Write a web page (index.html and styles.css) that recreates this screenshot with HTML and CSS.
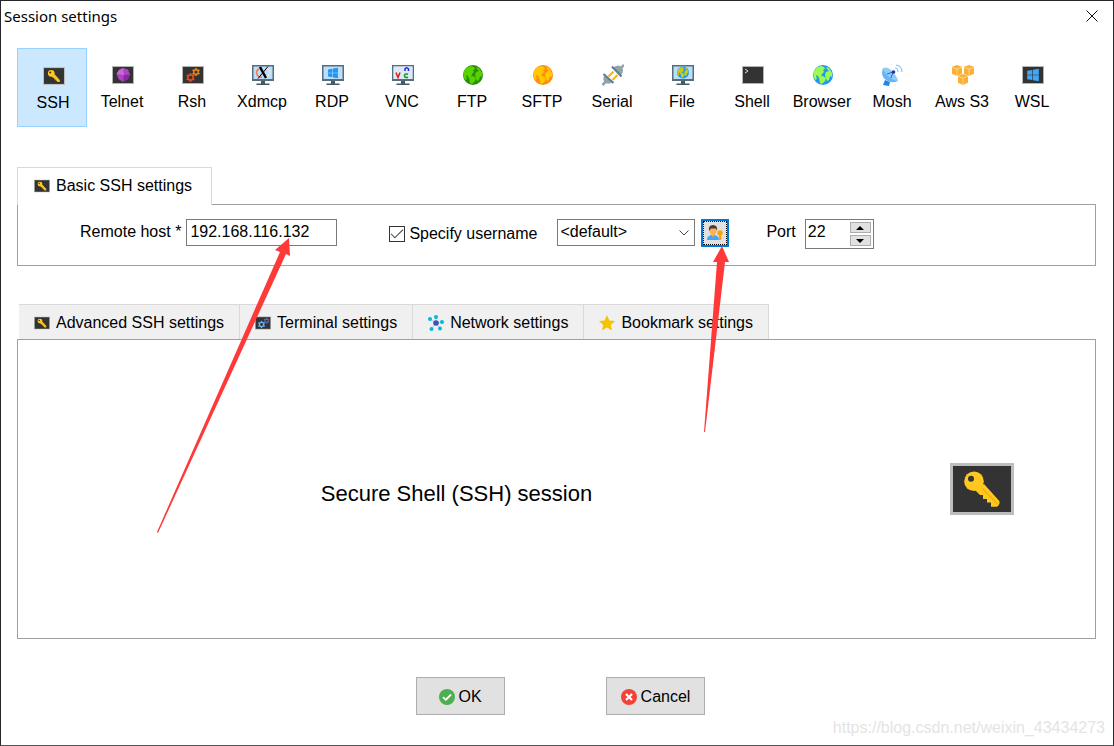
FILE: index.html
```html
<!DOCTYPE html>
<html lang="en">
<head>
<meta charset="utf-8">
<meta name="viewport" content="width=device-width, initial-scale=1">
<title>Session settings</title>
<link rel="stylesheet" href="styles.css">
</head>
<body>
<svg class="sprite" aria-hidden="true">
  <symbol id="key" viewBox="0 0 64 52">
    <rect width="64" height="52" fill="#bdbdbd"/>
    <rect x="3" y="3" width="58" height="46" fill="#333"/>
    <path d="M34 21 49.300 38Q50.500 41 47 43.800H41V39.500H37V36H33V32H30L25 27Z" fill="#ffc71f"/>
    <path d="M32.500 25.500 48 41.500" stroke="#efb410" stroke-width="1.500"/>
    <circle cx="24" cy="18.300" r="9.800" fill="#ffc71f"/>
    <circle cx="21" cy="15.700" r="3" fill="#333"/>
  </symbol>
  <symbol id="screen" viewBox="0 0 24 24">
    <rect x="2" y="3" width="22" height="18" fill="#b4b4b4"/>
    <rect x="3" y="4" width="20" height="16" fill="#333"/>
  </symbol>
  <symbol id="monitor" viewBox="0 0 24 24">
    <path d="M2 2h22v16H2z" fill="#546e7a"/>
    <path d="M3.500 3.500h19v12.500h-19z" fill="#bbdefb"/>
    <path d="M11 18h4v2.500h-4zM6.500 20.500h13V22h-13z" fill="#455a64"/>
  </symbol>
  <symbol id="land" viewBox="0 0 20 20">
    <path d="M1 6 4 2.500 8 1l3 1 1 2-2 1 1 2-2 2-1 3-2 1-2-3-1 1 1 3-2 1Q-.5 10 1 6ZM6 12l4-1 3 2-1 3-3 3-2-1ZM13 2l3 1 3 5v4l-2-1-1 4-2 1-2-6 1-3 3-1-2-2Z"/>
  </symbol>
  <symbol id="windows" viewBox="0 0 20 20">
    <path d="m1 3.500 8-1.300V9.500H1zM10 2l9-1.500v9h-9zM1 10.500h8v7.300l-8-1.300zM10 10.500h9v9L10 18z"/>
  </symbol>
  <symbol id="cog" viewBox="0 0 12 12">
    <circle cx="6" cy="6" r="3.500" fill="none" stroke="currentColor" stroke-width="2.200"/>
    <path d="M6 0v2M6 10v2M.8 3l1.800 1M9.400 8l1.800 1M.8 9l1.800-1M9.400 4l1.800-1" stroke="currentColor" stroke-width="2.400"/>
  </symbol>
  <symbol id="cube" viewBox="0 0 12 12">
    <path d="m6 0 5.500 2v7.500L6 12 .5 9.500V2z" fill="#fbb034"/>
    <path d="m.5 2.500 5.500 2 5.500-2M6 4.500V12" fill="none" stroke="#fde0a6" stroke-width=".8"/>
  </symbol>
</svg>

<main class="window">
  <header class="titlebar">
    <h1 class="title">Session settings</h1>
    <button class="close" type="button" aria-label="Close">
      <svg width="12" height="12" viewBox="0 0 12 12"><path d="m.5.5 11 11m0-11-11 11" stroke="#111" stroke-width="1"/></svg>
    </button>
  </header>

  <nav class="sessions" aria-label="Session type">
    <button class="session session-active" type="button">
      <svg class="session-icon" viewBox="0 0 24 24"><use href="#key" x="2" y="3" width="22" height="18"/></svg>SSH</button>
    <button class="session" type="button">
      <svg class="session-icon" viewBox="0 0 24 24"><use href="#screen"/><path d="m13 5 5 1.500 2 5-2 4.500-5 3-4.500-3L6.500 11 9 7z" fill="#ab47bc"/><path d="m14 12 6-.5-2 4.500-5 3z" fill="#8e24aa"/><path d="m9 7 4-2 1 7-7.500-1z" fill="#ce63db"/></svg>Telnet</button>
    <button class="session" type="button">
      <svg class="session-icon" viewBox="0 0 24 24"><use href="#screen"/><use href="#cog" class="cog-red" x="6" y="10" width="9" height="9"/><use href="#cog" class="cog-amber" x="12" y="5" width="8" height="8"/></svg>Rsh</button>
    <button class="session" type="button">
      <svg class="session-icon" viewBox="0 0 24 24"><use href="#monitor"/><path d="M17 5.500c5 2 3 8-2 9" fill="none" stroke="#f2e6e0" stroke-width="1.500"/><path d="M9 6c-4 2-3 8 3 8.500" fill="none" stroke="#f4774f" stroke-width="1.500"/><path d="m10 4 6 11" stroke="#000" stroke-width="2.500"/><path d="m18 3.500-10 12" stroke="#000" stroke-width="1"/></svg>Xdmcp</button>
    <button class="session" type="button">
      <svg class="session-icon" viewBox="0 0 24 24"><use href="#monitor"/><use href="#windows" x="7.500" y="4.500" width="11" height="11" fill="#2196f3"/></svg>RDP</button>
    <button class="session" type="button">
      <svg class="session-icon" viewBox="0 0 24 24"><use href="#monitor"/><path d="M3.500 3.500h19v12.500h-19z" fill="#dceaf6"/><path d="m6 9.500 2 5 2-5" fill="none" stroke="#e5191c" stroke-width="1.500"/><path d="M15 8V6q1.500-2.500 3.500 0v2" fill="none" stroke="#2626e0" stroke-width="1.500"/><path d="M18 11.200q-3.500-1-3.500 1.500t3.500 1.500" fill="none" stroke="#109618" stroke-width="1.500"/></svg>VNC</button>
    <button class="session" type="button">
      <svg class="session-icon" viewBox="0 0 24 24"><circle cx="13" cy="12" r="10" fill="#2e8b0d"/><use href="#land" x="3" y="2" width="20" height="20" fill="#55d400"/></svg>FTP</button>
    <button class="session" type="button">
      <svg class="session-icon" viewBox="0 0 24 24"><circle cx="13" cy="12" r="10" fill="#ff8c0a"/><use href="#land" x="3" y="2" width="20" height="20" fill="#ffc800"/></svg>SFTP</button>
    <button class="session" type="button">
      <svg class="session-icon" viewBox="0 0 24 24"><path d="m2.500 22 4-4M20 6l4-4" stroke="#90a4ae" stroke-width="2.500"/><path d="M4.500 12q-2.500 5 .5 7.500t8-.5zM12.500 5q5.500-4.500 9-1t-1 9z" fill="#90a4ae"/><path d="m3.500 11 10 9M12 3.500l9.500 10" stroke="#607d8b" stroke-width="2"/><path d="m8.500 13.500 5-5m-1 8.500 5-5" stroke="#ffb300" stroke-width="2"/></svg>Serial</button>
    <button class="session" type="button">
      <svg class="session-icon" viewBox="0 0 24 24"><use href="#monitor"/><circle cx="13" cy="9.500" r="6" fill="#1e9bee"/><use href="#land" x="7" y="3.500" width="12" height="12" fill="#c6c920"/></svg>File</button>
    <button class="session" type="button">
      <svg class="session-icon" viewBox="0 0 24 24"><use href="#screen"/><path d="m5 6 3 2-3 2" fill="none" stroke="#ddd" stroke-width="1"/></svg>Shell</button>
    <button class="session" type="button">
      <svg class="session-icon" viewBox="0 0 24 24"><circle cx="13" cy="12" r="10" fill="#2196f3"/><use href="#land" x="3" y="2" width="20" height="20" fill="#9cfc50"/></svg>Browser</button>
    <button class="session" type="button">
      <svg class="session-icon" viewBox="0 0 24 24"><path d="m5 17-2 5 6 1 1-4z" fill="#1e88e5"/><path d="M3 5q-3 8 3 12t12 1z" fill="#64b5f6"/><path d="M3 5q5-2 10 4t5 9q-5 0-10-5T3 5" fill="#90caf9"/><path d="m7 11 6-2-2 6" fill="none" stroke="#1976d2"/><circle cx="13.500" cy="9" r="1.800" fill="#283593"/><path d="M15 5q3 0 3 4M16 2q6 1 6 7" fill="none" stroke="#81c3f5" stroke-width="1.100"/></svg>Mosh</button>
    <button class="session" type="button">
      <svg class="session-icon" viewBox="0 0 24 24"><use href="#cube" x="1.500" y="2" width="11" height="11"/><use href="#cube" x="13.500" y="2" width="11" height="11"/><use href="#cube" x="7.500" y="11" width="11" height="11"/></svg>Aws S3</button>
    <button class="session" type="button">
      <svg class="session-icon" viewBox="0 0 24 24"><use href="#screen"/><use href="#windows" x="6.500" y="5.500" width="13" height="13" fill="#42a5f5"/></svg>WSL</button>
  </nav>

  <section class="group">
    <div class="tabs" role="tablist">
      <button class="tab tab-active" type="button" role="tab" aria-selected="true"><svg class="tab-icon" viewBox="0 0 64 52"><use href="#key"/></svg>Basic SSH settings</button>
    </div>
    <form class="panel basic">
      <div class="field host">
        <label class="label" for="host">Remote host *</label>
        <input class="text host-input" id="host" type="text" value="192.168.116.132">
      </div>
      <div class="field user">
        <input class="check" id="specify" type="checkbox" checked>
        <label class="label user-label" for="specify">Specify username</label>
        <select class="text user-select" aria-label="Username"><option>&lt;default&gt;</option></select>
        <button class="user-button" type="button" aria-label="Manage users">
          <svg width="18" height="18" viewBox="0 0 18 18"><path d="M1 16q0-5 6-5t6 5z" fill="#42a5f5"/><path d="m5 10 2 4 2-4z" fill="#f6a53c"/><ellipse cx="7" cy="6.500" rx="3.500" ry="4.500" fill="#ffb350"/><path d="M3 7Q2 1 7 1t4 6L10 4.500H5z" fill="#4b3a35"/><circle cx="14" cy="9" r="2.700" fill="#ffa000"/><path d="M14 10v6" stroke="#ffa000" stroke-width="2"/><path d="M14 14h2" stroke="#ffa000"/></svg>
        </button>
      </div>
      <div class="field port">
        <label class="label" for="port">Port</label>
        <div class="spinner">
          <input class="port-input" id="port" type="text" inputmode="numeric" value="22">
          <div class="steps">
            <button class="step" type="button" aria-label="Increase port"><svg width="8" height="4" viewBox="0 0 8 4"><path d="M4 0 8 4H0z"/></svg></button>
            <button class="step" type="button" aria-label="Decrease port"><svg width="8" height="4" viewBox="0 0 8 4"><path d="M0 0h8L4 4z"/></svg></button>
          </div>
        </div>
      </div>
    </form>
  </section>

  <section class="group group-more">
    <div class="tabs tabs-more" role="tablist">
      <button class="tab" type="button" role="tab"><svg class="tab-icon" viewBox="0 0 64 52"><use href="#key"/></svg>Advanced SSH settings</button>
      <button class="tab" type="button" role="tab"><svg class="tab-icon" viewBox="2 3 22 18"><use href="#screen" width="24" height="24"/><use href="#cog" class="cog-sky" x="6" y="9" width="10" height="10"/><use href="#cog" class="cog-indigo" x="14" y="5" width="8" height="8"/></svg>Terminal settings</button>
      <button class="tab" type="button" role="tab"><svg class="tab-icon" viewBox="0 0 16 16"><path d="M8 8V2M8 8l6-1M8 8l4 5M8 8l-5 6M8 8 2 4" stroke="#b9c6e6"/><g fill="#00bcd4"><circle cx="8" cy="2" r="2"/><circle cx="14" cy="7" r="2"/><circle cx="12" cy="13.500" r="2"/><circle cx="3.500" cy="14" r="2"/><circle cx="2" cy="4" r="2"/></g><circle cx="8" cy="8" r="2.800" fill="#3f51b5"/></svg>Network settings</button>
      <button class="tab" type="button" role="tab"><svg class="tab-icon" viewBox="0 0 16 16"><path d="m8 0 2.400 5.500 5.600.6-4.200 3.900L13 15.500l-5-2.900-5 2.900L4.200 10 0 6.100l5.600-.6z" fill="#f5c400"/></svg>Bookmark settings</button>
    </div>
    <div class="panel summary">
      <h2 class="summary-title">Secure Shell (SSH) session</h2>
      <svg class="summary-icon" viewBox="0 0 64 52"><use href="#key"/></svg>
    </div>
  </section>

  <footer class="actions">
    <button class="action" type="button"><svg width="16" height="16" viewBox="0 0 16 16"><circle cx="8" cy="8" r="8" fill="#4caf50"/><path d="m4 8.200 2.800 2.600L12 5.500" fill="none" stroke="#fff" stroke-width="1.800"/></svg>OK</button>
    <button class="action" type="button"><svg width="16" height="16" viewBox="0 0 16 16"><circle cx="8" cy="8" r="8" fill="#f44336"/><path d="m5 5 6 6m0-6-6 6" stroke="#fff" stroke-width="2.200"/></svg>Cancel</button>
  </footer>

  <svg class="arrows" width="760" height="540" viewBox="0 0 760 540" fill="#ff3838" aria-hidden="true">
    <path d="m289 238 1 18-4-2-128 279-1-1L280 252l-5-2z"/>
    <path d="m722 246 7 16h-4l-20 170h-1l13-170h-4z"/>
  </svg>
  <span class="watermark">https://blog.csdn.net/weixin_43434273</span>
</main>
</body>
</html>
```

FILE: styles.css
```css
* {
  box-sizing: border-box;
}

body {
  margin: 0;
  background: #fff;
  color: #000;
  font: 16px/18px "Liberation Sans", Arial, sans-serif;
}

button,
input,
select {
  margin: 0;
  padding: 0;
  border: 0;
  border-radius: 0;
  background: none;
  color: inherit;
  font: inherit;
}

svg {
  flex: none;
}

.sprite {
  position: absolute;
  width: 0;
  height: 0;
}

.window {
  position: relative;
  display: flex;
  flex-direction: column;
  min-height: 100vh;
  border: 1px solid #24262c;
  border-bottom-color: #555;
}

.titlebar {
  display: flex;
  align-items: center;
  justify-content: space-between;
  height: 30px;
  padding: 0 15px 0 3px;
}

.title {
  margin: 0;
  font: 400 15px/20px "Noto Sans", sans-serif;
}

.close {
  display: flex;
}

.sessions {
  display: flex;
  margin: 17px 16px 0;
}

.session {
  display: flex;
  flex-direction: column;
  align-items: center;
  gap: 6px;
  width: 70px;
  padding: 14px 0 15px;
  border: 1px solid transparent;
  white-space: nowrap;
}

.session-active {
  padding: 15px 0 14px 2px;
  border-color: #99d1ff;
  background: #cce8ff;
}

.session-icon {
  width: 24px;
  height: 24px;
}

.cog-red {
  color: #e64a19;
}

.cog-amber {
  color: #f08c14;
}

.cog-sky {
  color: #64b5f6;
}

.cog-indigo {
  color: #5c6bc0;
}

.group {
  display: flex;
  flex-direction: column;
  margin: 40px 17px 0 16px;
}

.group-more {
  flex: 1;
  margin-top: 38px;
}

.tabs {
  display: flex;
}

.tabs-more {
  padding-left: 2px;
}

.tab {
  display: flex;
  align-items: center;
  gap: 6px;
  height: 35px;
  padding: 1px 15px 0;
  border: solid #d9d9d9;
  border-width: 1px 1px 0 0;
  background: #f0f0f0;
  white-space: nowrap;
}

.tab-active {
  position: relative;
  height: 38px;
  margin-bottom: -1px;
  padding: 0 19px 2px 16px;
  border-left-width: 1px;
  background: #fff;
}

.tab-icon {
  width: 16px;
  height: 16px;
}

.panel {
  border: 1px solid #a0a0a0;
}

.basic {
  display: flex;
  align-items: flex-start;
  padding: 14px 0 16px 62px;
}

.field {
  display: flex;
  align-items: flex-start;
}

.label {
  padding-top: 4px;
  white-space: nowrap;
}

.host {
  gap: 5px;
}

.text {
  height: 27px;
  border: 1px solid #7a7a7a;
  background: #fff;
}

.host-input {
  width: 151px;
  padding: 0 3px 2px;
}

.user {
  margin-left: 52px;
}

.check {
  display: grid;
  place-items: center;
  width: 16px;
  height: 16px;
  margin: 7px 4px 0 0;
  border: 1px solid #333;
  appearance: none;
}

.check:checked::before {
  width: 11px;
  height: 5px;
  margin-bottom: 4px;
  border: solid #333;
  border-width: 0 0 1px 1px;
  content: "";
  transform: rotate(-45deg);
}

.user-label {
  width: 148px;
  padding-top: 6px;
}

.user-select {
  width: 138px;
  padding: 0 20px 2px 2px;
  background: url("data:image/svg+xml,%3Csvg xmlns='http://www.w3.org/2000/svg' width='10' height='6'%3E%3Cpath d='M.5.5 5 5 9.500.5' fill='none' stroke='%23444'/%3E%3C/svg%3E") no-repeat right 5px center;
  appearance: none;
}

.user-button {
  display: grid;
  place-items: center;
  width: 28px;
  height: 28px;
  margin-left: 6px;
  border: 2px solid #0078d7;
  outline: 1px dotted #000;
  outline-offset: -3px;
  background: #e1e1e1;
}

.port {
  gap: 9px;
  margin-left: 37px;
}

.spinner {
  display: flex;
  justify-content: space-between;
  width: 69px;
  height: 30px;
  padding: 2px;
  border: 1px solid #7a7a7a;
}

.port-input {
  width: 40px;
  height: 20px;
}

.steps {
  display: flex;
  flex-direction: column;
  gap: 2px;
}

.step {
  display: grid;
  place-items: center;
  width: 21px;
  height: 11px;
  border: 1px solid #adadad;
  background: #e1e1e1;
}

.summary {
  display: flex;
  flex: 1;
  align-items: center;
  gap: 55px;
  padding-right: 81px;
}

.summary-title {
  flex: 1;
  margin: 0;
  padding-top: 10px;
  font-size: 22px;
  font-weight: 400;
  line-height: 26px;
  text-align: center;
}

.summary-icon {
  width: 64px;
  height: 52px;
}

.actions {
  display: flex;
  justify-content: center;
  gap: 101px;
  padding: 38px 0 30px 7px;
}

.action {
  display: flex;
  align-items: center;
  justify-content: center;
  gap: 4px;
  height: 38px;
  min-width: 89px;
  padding: 1px 14px 0;
  border: 1px solid #adadad;
  background: #e1e1e1;
}

.arrows {
  position: absolute;
  top: -1px;
  left: -1px;
  pointer-events: none;
}

.watermark {
  position: absolute;
  right: 8px;
  bottom: 8px;
  color: #e4e4e4;
  pointer-events: none;
}
```
